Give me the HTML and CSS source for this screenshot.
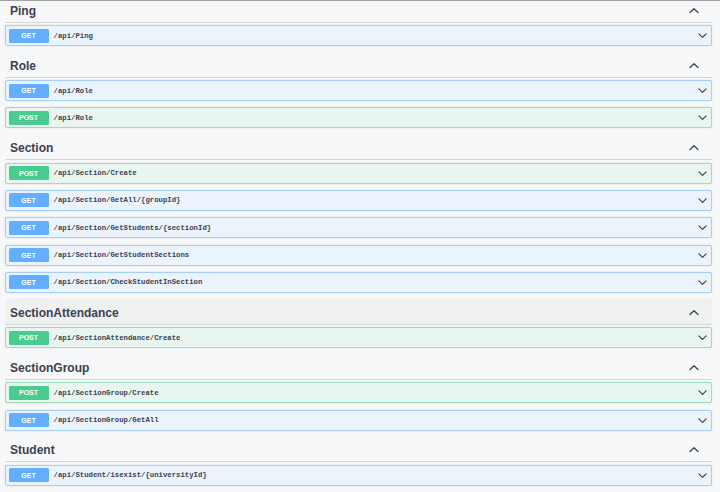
FILE: index.html
```html
<!DOCTYPE html>
<html lang="en">
<head>
<meta charset="utf-8">
<title>API</title>
<link rel="stylesheet" href="styles.css">
</head>
<body>
<div class="page">
  <section class="tag">
    <div class="tag-header"><h3>Ping</h3><svg class="chev-up" viewBox="0 0 10 10"><polyline points="1,6.5 5,2.8 9,6.5"/></svg></div>
    <div class="op get"><span class="method">GET</span><span class="path">/api/Ping</span><svg class="chev-down" viewBox="0 0 10 10"><polyline points="1,3.2 5,7 9,3.2"/></svg></div>
  </section>
  <section class="tag">
    <div class="tag-header"><h3>Role</h3><svg class="chev-up" viewBox="0 0 10 10"><polyline points="1,6.5 5,2.8 9,6.5"/></svg></div>
    <div class="op get"><span class="method">GET</span><span class="path">/api/Role</span><svg class="chev-down" viewBox="0 0 10 10"><polyline points="1,3.2 5,7 9,3.2"/></svg></div>
    <div class="op post"><span class="method">POST</span><span class="path">/api/Role</span><svg class="chev-down" viewBox="0 0 10 10"><polyline points="1,3.2 5,7 9,3.2"/></svg></div>
  </section>
  <section class="tag">
    <div class="tag-header"><h3>Section</h3><svg class="chev-up" viewBox="0 0 10 10"><polyline points="1,6.5 5,2.8 9,6.5"/></svg></div>
    <div class="op post"><span class="method">POST</span><span class="path">/api/Section/Create</span><svg class="chev-down" viewBox="0 0 10 10"><polyline points="1,3.2 5,7 9,3.2"/></svg></div>
    <div class="op get"><span class="method">GET</span><span class="path">/api/Section/GetAll/{groupId}</span><svg class="chev-down" viewBox="0 0 10 10"><polyline points="1,3.2 5,7 9,3.2"/></svg></div>
    <div class="op get"><span class="method">GET</span><span class="path">/api/Section/GetStudents/{sectionId}</span><svg class="chev-down" viewBox="0 0 10 10"><polyline points="1,3.2 5,7 9,3.2"/></svg></div>
    <div class="op get"><span class="method">GET</span><span class="path">/api/Section/GetStudentSections</span><svg class="chev-down" viewBox="0 0 10 10"><polyline points="1,3.2 5,7 9,3.2"/></svg></div>
    <div class="op get"><span class="method">GET</span><span class="path">/api/Section/CheckStudentInSection</span><svg class="chev-down" viewBox="0 0 10 10"><polyline points="1,3.2 5,7 9,3.2"/></svg></div>
  </section>
  <section class="tag">
    <div class="tag-header hover"><h3>SectionAttendance</h3><svg class="chev-up" viewBox="0 0 10 10"><polyline points="1,6.5 5,2.8 9,6.5"/></svg></div>
    <div class="op post"><span class="method">POST</span><span class="path">/api/SectionAttendance/Create</span><svg class="chev-down" viewBox="0 0 10 10"><polyline points="1,3.2 5,7 9,3.2"/></svg></div>
  </section>
  <section class="tag">
    <div class="tag-header"><h3>SectionGroup</h3><svg class="chev-up" viewBox="0 0 10 10"><polyline points="1,6.5 5,2.8 9,6.5"/></svg></div>
    <div class="op post"><span class="method">POST</span><span class="path">/api/SectionGroup/Create</span><svg class="chev-down" viewBox="0 0 10 10"><polyline points="1,3.2 5,7 9,3.2"/></svg></div>
    <div class="op get"><span class="method">GET</span><span class="path">/api/SectionGroup/GetAll</span><svg class="chev-down" viewBox="0 0 10 10"><polyline points="1,3.2 5,7 9,3.2"/></svg></div>
  </section>
  <section class="tag">
    <div class="tag-header"><h3>Student</h3><svg class="chev-up" viewBox="0 0 10 10"><polyline points="1,6.5 5,2.8 9,6.5"/></svg></div>
    <div class="op get"><span class="method">GET</span><span class="path">/api/Student/isexist/{universityId}</span><svg class="chev-down" viewBox="0 0 10 10"><polyline points="1,3.2 5,7 9,3.2"/></svg></div>
  </section>
</div>
</body>
</html>
```
FILE: styles.css
```css
html, body {
  margin: 0;
  padding: 0;
}
body {
  background: #f7f8f9;
  font-family: "Liberation Sans", Arial, sans-serif;
  color: #3b4151;
  overflow: hidden;
}
.page {
  border-top: 1px solid #a3a3a3;
  padding: 0 8px 0 5px;
}
.tag-header {
  display: flex;
  align-items: center;
  height: 25.4px;
  box-sizing: border-box;
  border-bottom: 1px solid #d5d6d9;
  padding: 2.5px 0 0 5px;
  margin-bottom: 2.5px;
}
.tag:first-child .tag-header {
  margin-top: -3.9px;
}
.tag-header.hover {
  background: #f0f1f1;
}
.tag-header h3 {
  margin: 0;
  flex: 1;
  font-size: 12px;
  font-weight: 700;
  line-height: 1;
}
.chev-up, .chev-down {
  fill: none;
  stroke: #3b4151;
  stroke-width: 1.3;
  stroke-linecap: round;
  stroke-linejoin: round;
}
.chev-up {
  width: 10px;
  height: 10px;
  margin-right: 13px;
}
.chev-down {
  width: 9px;
  height: 9px;
  margin-right: 1.5px;
}
.op {
  display: flex;
  align-items: center;
  height: 21px;
  box-sizing: border-box;
  border: 1px solid;
  border-radius: 2px;
  padding: 0 2.5px;
  margin-bottom: 6.3px;
  box-shadow: 0 0 1.5px rgba(0, 0, 0, 0.15);
}
.op.get {
  background: #ebf3fc;
  border-color: #a6cff8;
}
.op.post {
  background: #e8f6ef;
  border-color: #9edcbf;
}
.method {
  width: 40px;
  height: 14px;
  border-radius: 1.5px;
  color: #fff;
  font-size: 7px;
  font-weight: 700;
  display: flex;
  align-items: center;
  justify-content: center;
}
.get .method {
  background: #61affe;
}
.post .method {
  background: #49cc90;
}
.path {
  flex: 1;
  padding-left: 5px;
  font-family: "Liberation Mono", "Courier New", monospace;
  font-weight: 700;
  font-size: 7.3px;
  color: #3b4151;
}
```
